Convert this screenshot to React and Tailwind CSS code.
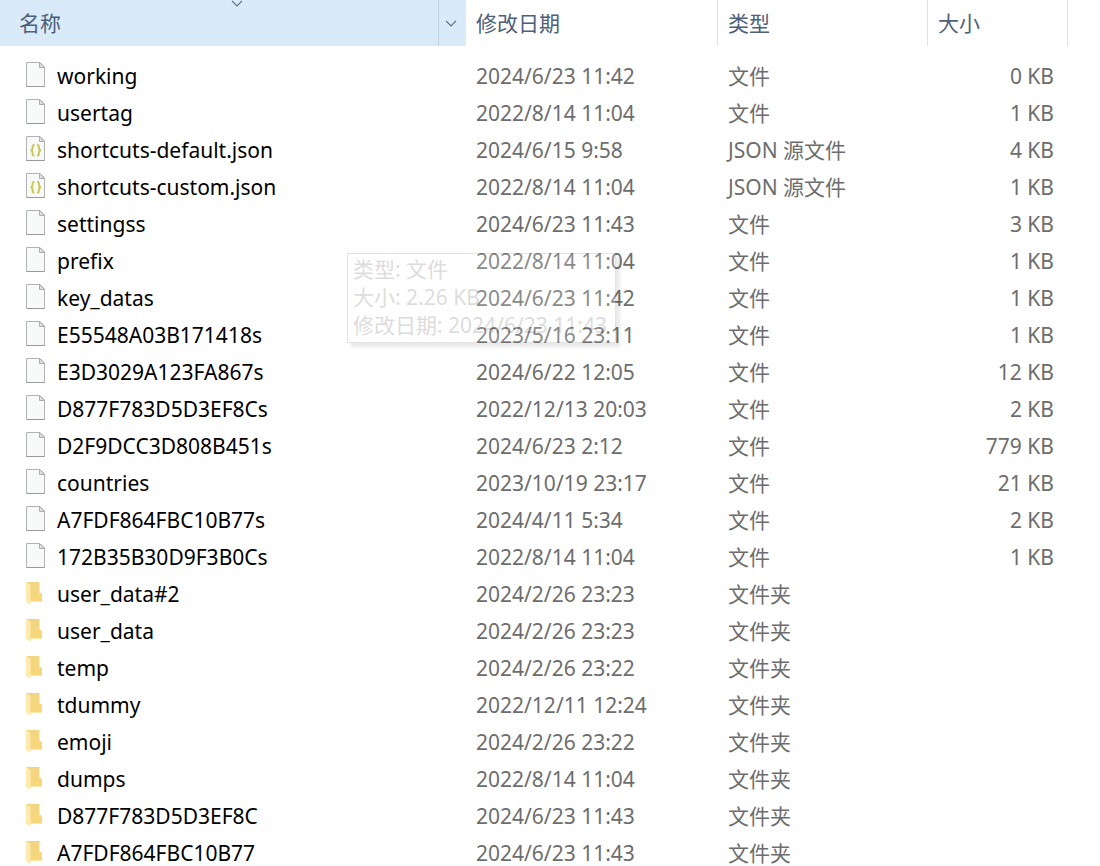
import React from "react";

const FILE = "文件";
const JSON_FILE = "JSON 源文件";
const FOLDER = "文件夹";

const entries = [
  ["working", "2024/6/23 11:42", FILE, "0 KB"],
  ["usertag", "2022/8/14 11:04", FILE, "1 KB"],
  ["shortcuts-default.json", "2024/6/15 9:58", JSON_FILE, "4 KB"],
  ["shortcuts-custom.json", "2022/8/14 11:04", JSON_FILE, "1 KB"],
  ["settingss", "2024/6/23 11:43", FILE, "3 KB"],
  ["prefix", "2022/8/14 11:04", FILE, "1 KB"],
  ["key_datas", "2024/6/23 11:42", FILE, "1 KB"],
  ["E55548A03B171418s", "2023/5/16 23:11", FILE, "1 KB"],
  ["E3D3029A123FA867s", "2024/6/22 12:05", FILE, "12 KB"],
  ["D877F783D5D3EF8Cs", "2022/12/13 20:03", FILE, "2 KB"],
  ["D2F9DCC3D808B451s", "2024/6/23 2:12", FILE, "779 KB"],
  ["countries", "2023/10/19 23:17", FILE, "21 KB"],
  ["A7FDF864FBC10B77s", "2024/4/11 5:34", FILE, "2 KB"],
  ["172B35B30D9F3B0Cs", "2022/8/14 11:04", FILE, "1 KB"],
  ["user_data#2", "2024/2/26 23:23", FOLDER, ""],
  ["user_data", "2024/2/26 23:23", FOLDER, ""],
  ["temp", "2024/2/26 23:22", FOLDER, ""],
  ["tdummy", "2022/12/11 12:24", FOLDER, ""],
  ["emoji", "2024/2/26 23:22", FOLDER, ""],
  ["dumps", "2022/8/14 11:04", FOLDER, ""],
  ["D877F783D5D3EF8C", "2024/6/23 11:43", FOLDER, ""],
  ["A7FDF864FBC10B77", "2024/6/23 11:43", FOLDER, ""],
];

function FileIcon({ json }) {
  return (
    <svg className="h-[25px] w-5 shrink-0" viewBox="0 0 20 25" fill="none" aria-hidden="true">
      <path d="M.5 .5H14L18.5 5V24.5H.5Z" fill="#f8f9f9" stroke="#b2b2b2" />
      <path d="M.5 24.5H18.5" stroke="#999" />
      <path d="M13.5 .5V5.5H18.5Z" fill="#e2e2e2" stroke="#adadad" />
      {json && (
        <g stroke="#c8ca58" strokeWidth="2">
          <path d="M8.5 9H8C7 9 6.6 9.6 6.6 10.5V12.2C6.6 13.4 6 14 4.6 14.3C6 14.6 6.6 15.2 6.6 16.4V18.1C6.6 19 7 19.6 8 19.6H8.5" />
          <path d="M11 9H11.5C12.5 9 12.9 9.6 12.9 10.5V12.2C12.9 13.4 13.5 14 14.9 14.3C13.5 14.6 12.9 15.2 12.9 16.4V18.1C12.9 19 12.5 19.6 11.5 19.6H11" />
        </g>
      )}
    </svg>
  );
}

function FolderIcon() {
  return (
    <svg className="h-[25px] w-5 shrink-0" viewBox="0 0 20 25" aria-hidden="true">
      <defs>
        <linearGradient id="folder-back" x1="0" y1="0" x2="1" y2="1">
          <stop offset="0" stopColor="#efd486" />
          <stop offset="1" stopColor="#f9d878" />
        </linearGradient>
      </defs>
      <path d="M0 2H13.5V13H15L16 14.2V21.5H4L0 21Z" fill="url(#folder-back)" />
      <path d="M0 2L4.5 5V25L0 22Z" fill="#ffebae" />
      <path d="M4.5 21H16V22H4.5Z" fill="#fbe6a9" />
    </svg>
  );
}

function Chevron({ className }) {
  return (
    <svg className={className} viewBox="0 0 12 7" fill="none" stroke="#5f6b76" strokeWidth="1.2" aria-hidden="true">
      <path d="M1 .8L6 5.8L11 .8" />
    </svg>
  );
}

function HeaderCell({ label }) {
  return (
    <th scope="col" className="h-[46px] border-r border-[#e2e2e2] p-0 text-left font-normal">
      <button type="button" className="h-[46px] w-full px-2.5 text-left">
        {label}
      </button>
    </th>
  );
}

function Row({ entry }) {
  const [name, date, type, size] = entry;
  return (
    <tr className="h-[37px] text-[#6d6d6d]">
      <td className="p-0 pl-[26px] text-black">
        <div className="flex items-center gap-[11px]">
          <span className="flex h-[27px] items-start">
            {type === FOLDER ? <FolderIcon /> : <FileIcon json={type === JSON_FILE} />}
          </span>
          <span>{name}</span>
        </div>
      </td>
      <td className="p-0 pl-2.5">{date}</td>
      <td className="p-0 pl-2.5">{type}</td>
      <td className="p-0 pr-3.5 text-right">{size}</td>
      <td className="p-0" />
    </tr>
  );
}

export default function App() {
  return (
    <main className="relative h-screen overflow-hidden bg-white font-['Noto_Sans','Noto_Sans_CJK_SC',sans-serif] text-[21px] leading-7">
      <table className="w-full table-fixed border-separate border-spacing-0 whitespace-nowrap">
        <colgroup>
          <col />
          <col className="w-[252px]" />
          <col className="w-[210px]" />
          <col className="w-[140px]" />
          <col className="w-8" />
        </colgroup>
        <thead className="text-[#4c607a]">
          <tr>
            <th scope="col" aria-sort="descending" className="h-[46px] bg-[#d9ebf9] p-0 font-normal">
              <div className="flex h-[46px]">
                <button type="button" className="relative flex-1 pl-[19px] text-left">
                  名称
                  <Chevron className="absolute top-0 right-[195px] h-[7px] w-3" />
                </button>
                <button
                  type="button"
                  aria-label="筛选"
                  className="flex w-7 items-center justify-center border-l border-[#bcd3e5] pr-1"
                >
                  <Chevron className="h-[7px] w-3" />
                </button>
              </div>
            </th>
            <HeaderCell label="修改日期" />
            <HeaderCell label="类型" />
            <HeaderCell label="大小" />
            <td />
          </tr>
        </thead>
        <tbody>
          <tr aria-hidden="true">
            <td colSpan={5} className="h-[11px] p-0" />
          </tr>
          {entries.map((entry) => (
            <Row key={entry[0]} entry={entry} />
          ))}
        </tbody>
      </table>
      <div
        role="tooltip"
        className="absolute top-[253px] left-[347px] border border-[#767676] bg-white pt-px pr-2 pb-[3px] pl-[5px] whitespace-nowrap text-[#575757] opacity-20 shadow-[4px_4px_3px_rgba(0,0,0,0.4)]"
      >
        <p>类型: 文件</p>
        <p>大小: 2.26 KB</p>
        <p>修改日期: 2024/6/23 11:43</p>
      </div>
    </main>
  );
}
